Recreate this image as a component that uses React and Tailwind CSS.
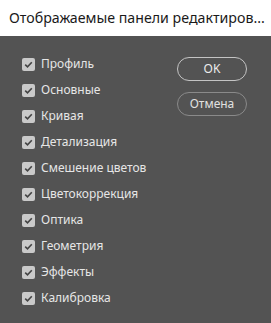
import React from "react";

const items = [
  "Профиль",
  "Основные",
  "Кривая",
  "Детализация",
  "Смешение цветов",
  "Цветокоррекция",
  "Оптика",
  "Геометрия",
  "Эффекты",
  "Калибровка",
];

function Check({ label }) {
  return (
    <div className="flex items-center h-[26px]">
      <span className="w-[13px] h-[13px] rounded-[2px] bg-[#c9c9c9] flex items-center justify-center">
        <svg width="9" height="9" viewBox="0 0 9 9">
          <path d="M1.2 4.6 L3.5 6.8 L7.8 2.2" fill="none" stroke="#444" strokeWidth="1.6" />
        </svg>
      </span>
      <span className="ml-[6px] text-[12px] text-[#e6e6e6]">{label}</span>
    </div>
  );
}

export default function App() {
  return (
    <div
      className="w-[271px] h-[323px] flex flex-col bg-[#535353]"
      style={{ fontFamily: '"Noto Sans", "Open Sans", sans-serif' }}
    >
      <div className="h-[36px] bg-white flex items-center pl-[9px] text-[14.2px] text-[#1a1a1a] whitespace-nowrap">
        Отображаемые панели редактиров...
      </div>
      <div className="flex flex-1 pt-[15px]">
        <div className="flex flex-col pl-[22px] flex-1">
          {items.map((t) => (
            <Check key={t} label={t} />
          ))}
        </div>
        <div className="flex flex-col pr-[24px] pt-[6px] gap-[11px]">
          <button className="w-[70px] h-[24px] rounded-full border border-[#c4c4c4] text-[12px] text-[#ececec]">
            OK
          </button>
          <button className="w-[70px] h-[24px] rounded-full border border-[#8a8a8a] text-[12px] text-[#e0e0e0]">
            Отмена
          </button>
        </div>
      </div>
    </div>
  );
}
